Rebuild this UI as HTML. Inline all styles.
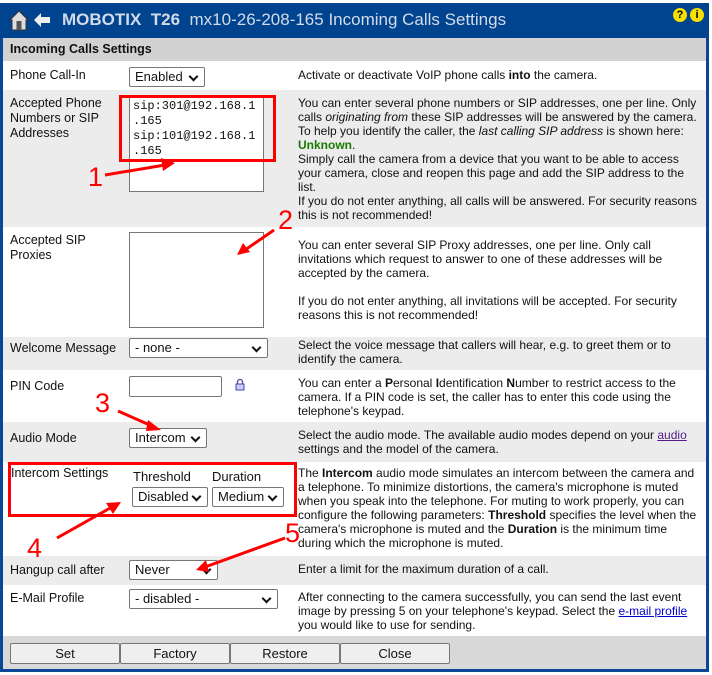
<!DOCTYPE html>
<html><head><meta charset="utf-8"><style>
*{box-sizing:border-box;margin:0;padding:0}
body{width:712px;height:675px;background:#fff;font-family:"Liberation Sans",Arial,sans-serif;font-size:12px;color:#111;position:relative;overflow:hidden}
.a{position:absolute}
.row{position:absolute;left:3px;width:703px}
.g{background:#ececec}.w{background:#fff}
.lbl{position:absolute;left:10px;line-height:15px;font-size:12.5px}
.d{position:absolute;left:298px;width:400px;line-height:14px;font-size:12px}
.sel{position:absolute;height:20px;border:1px solid #767676;border-radius:2px;background:#fff;font-size:13px;line-height:18px;padding-left:5px}
.sel:after{content:"";position:absolute;right:7px;top:5px;width:5px;height:5px;border-right:2px solid #111;border-bottom:2px solid #111;transform:rotate(45deg)}
.ta{position:absolute;border:1px solid #767676;background:#fff}
.btn{position:absolute;top:643px;height:21px;border:1px solid #777;border-radius:2px;background:#efefef;text-align:center;font-size:13px;line-height:19px}
.red{position:absolute;border:3px solid #f00}
.num{position:absolute;color:#f00;font-size:27px;line-height:27px}
a{color:#00c;text-decoration:underline}
</style></head><body>
<div class="a" style="left:0;top:3px;width:709px;height:669px;background:#0a4796"></div>
<div class="a" style="left:0;top:3px;width:709px;height:35px;background:#00438f"></div>
<svg class="a" style="left:8px;top:8px" width="46" height="24" viewBox="0 0 46 24">
<path d="M2 12 L11 3 L20 12 L18 12 L18 22 L4 22 L4 12Z" fill="#ddd" stroke="#333"/>
<rect x="8.5" y="13" width="5" height="9" fill="#555"/>
<path d="M26 12 L33 5 L33 9 L42 9 L42 15 L33 15 L33 19Z" fill="#eee"/>
</svg>
<div class="a" style="left:62px;top:10px;color:#d4dbe8;font-size:17px;line-height:20px"><b>MOBOTIX&nbsp; T26</b>&nbsp; mx10-26-208-165 Incoming Calls Settings</div>
<div class="a" style="left:673px;top:8px;width:14px;height:14px;border-radius:50%;background:#f5e000;color:#000;font-size:11px;font-weight:bold;text-align:center;line-height:14px">?</div>
<div class="a" style="left:690px;top:8px;width:14px;height:14px;border-radius:50%;background:#f5e000;color:#000;font-size:11px;font-weight:bold;text-align:center;line-height:14px">i</div>

<div class="row" style="top:38px;height:23px;background:#d2d2d2"><div class="lbl" style="left:7px;top:4px;font-weight:bold">Incoming Calls Settings</div></div>
<div class="row w" style="top:61px;height:29px"><div class="lbl" style="left:7px;top:7px">Phone Call-In</div></div>
<div class="row g" style="top:90px;height:137px"><div class="lbl" style="left:7px;top:6px">Accepted Phone<br>Numbers or SIP<br>Addresses</div></div>
<div class="row w" style="top:227px;height:110px"><div class="lbl" style="left:7px;top:6px">Accepted SIP<br>Proxies</div></div>
<div class="row g" style="top:337px;height:33px"><div class="lbl" style="left:7px;top:4px">Welcome Message</div></div>
<div class="row w" style="top:370px;height:52px"><div class="lbl" style="left:7px;top:9px">PIN Code</div></div>
<div class="row g" style="top:422px;height:40px"><div class="lbl" style="left:7px;top:9px">Audio Mode</div></div>
<div class="row w" style="top:462px;height:94px"><div class="lbl" style="left:8px;top:4px">Intercom Settings</div></div>
<div class="row g" style="top:556px;height:29px"><div class="lbl" style="left:7px;top:7px">Hangup call after</div></div>
<div class="row w" style="top:585px;height:51px"><div class="lbl" style="left:7px;top:6px">E-Mail Profile</div></div>
<div class="row" style="top:636px;height:33px;background:#d8d8d8"></div>

<div class="sel" style="left:129px;top:67px;width:76px">Enabled</div>
<div class="ta" style="left:129px;top:95px;width:135px;height:97px;font-family:'Liberation Mono',monospace;font-size:12px;line-height:15px;padding:3px 0 0 3px">sip:301@192.168.1<br>.165<br>sip:101@192.168.1<br>.165</div>
<div class="ta" style="left:129px;top:232px;width:135px;height:96px"></div>
<div class="sel" style="left:129px;top:338px;width:139px">- none -</div>
<div class="ta" style="left:129px;top:376px;width:93px;height:21px;border-radius:2px"></div>
<svg class="a" style="left:235px;top:378px" width="10" height="13" viewBox="0 0 10 13"><path d="M2.5 6V4a2.5 2.5 0 0 1 5 0v2" fill="none" stroke="#44a" stroke-width="1.3"/><rect x="1" y="6" width="8" height="6" fill="#ccf" stroke="#44a"/></svg>
<div class="sel" style="left:129px;top:428px;width:78px">Intercom</div>
<div class="a" style="left:133px;top:469px;font-size:13px">Threshold</div>
<div class="a" style="left:212px;top:469px;font-size:13px">Duration</div>
<div class="sel" style="left:132px;top:487px;width:76px">Disabled</div>
<div class="sel" style="left:212px;top:487px;width:72px">Medium</div>
<div class="sel" style="left:129px;top:560px;width:89px">Never</div>
<div class="sel" style="left:129px;top:589px;width:149px">- disabled -</div>

<div class="d" style="top:68px">Activate or deactivate VoIP phone calls <b>into</b> the camera.</div>
<div class="d" style="top:96px">You can enter several phone numbers or SIP addresses, one per line. Only calls <i>originating from</i> these SIP addresses will be answered by the camera. To help you identify the caller, the <i>last calling SIP address</i> is shown here: <b style="color:#1a7a00">Unknown</b>.<br>Simply call the camera from a device that you want to be able to access your camera, close and reopen this page and add the SIP address to the list.<br>If you do not enter anything, all calls will be answered. For security reasons this is not recommended!</div>
<div class="d" style="top:238px">You can enter several SIP Proxy addresses, one per line. Only call invitations which request to answer to one of these addresses will be accepted by the camera.<br><br>If you do not enter anything, all invitations will be accepted. For security reasons this is not recommended!</div>
<div class="d" style="top:338px">Select the voice message that callers will hear, e.g. to greet them or to identify the camera.</div>
<div class="d" style="top:376px">You can enter a <b>P</b>ersonal <b>I</b>dentification <b>N</b>umber to restrict access to the camera. If a PIN code is set, the caller has to enter this code using the telephone's keypad.</div>
<div class="d" style="top:428px">Select the audio mode. The available audio modes depend on your <a style="color:#551a8b">audio</a> settings and the model of the camera.</div>
<div class="d" style="top:466px">The <b>Intercom</b> audio mode simulates an intercom between the camera and a telephone. To minimize distortions, the camera's microphone is muted when you speak into the telephone. For muting to work properly, you can configure the following parameters: <b>Threshold</b> specifies the level when the camera's microphone is muted and the <b>Duration</b> is the minimum time during which the microphone is muted.</div>
<div class="d" style="top:562px">Enter a limit for the maximum duration of a call.</div>
<div class="d" style="top:590px">After connecting to the camera successfully, you can send the last event image by pressing 5 on your telephone's keypad. Select the <a>e-mail profile</a> you would like to use for sending.</div>

<div class="btn" style="left:10px;width:110px">Set</div>
<div class="btn" style="left:120px;width:110px">Factory</div>
<div class="btn" style="left:230px;width:110px">Restore</div>
<div class="btn" style="left:340px;width:110px">Close</div>

<div class="red" style="left:119px;top:95px;width:157px;height:67px"></div>
<div class="red" style="left:8px;top:462px;width:289px;height:55px"></div>
<div class="num" style="left:88px;top:164px">1</div>
<div class="num" style="left:278px;top:207px">2</div>
<div class="num" style="left:95px;top:390px">3</div>
<div class="num" style="left:27px;top:535px">4</div>
<div class="num" style="left:285px;top:520px">5</div>
<svg class="a" style="left:0;top:0" width="712" height="675">
<g stroke="#f00" stroke-width="3" fill="#f00">
<line x1="105" y1="175" x2="165" y2="165"/><path d="M175 163 L161 158 L163 171Z" stroke="none"/>
<line x1="274" y1="230" x2="245" y2="250"/><path d="M237 255 L243 243 L250 252Z" stroke="none"/>
<line x1="118" y1="411" x2="152" y2="426"/><path d="M161 430 L148 420 L146 431Z" stroke="none"/>
<line x1="57" y1="538" x2="112" y2="507"/><path d="M121 502 L106 503 L113 514Z" stroke="none"/>
<line x1="285" y1="538" x2="205" y2="567"/><path d="M196 570 L206 560 L209 572Z" stroke="none"/>
</g></svg>
</body></html>
